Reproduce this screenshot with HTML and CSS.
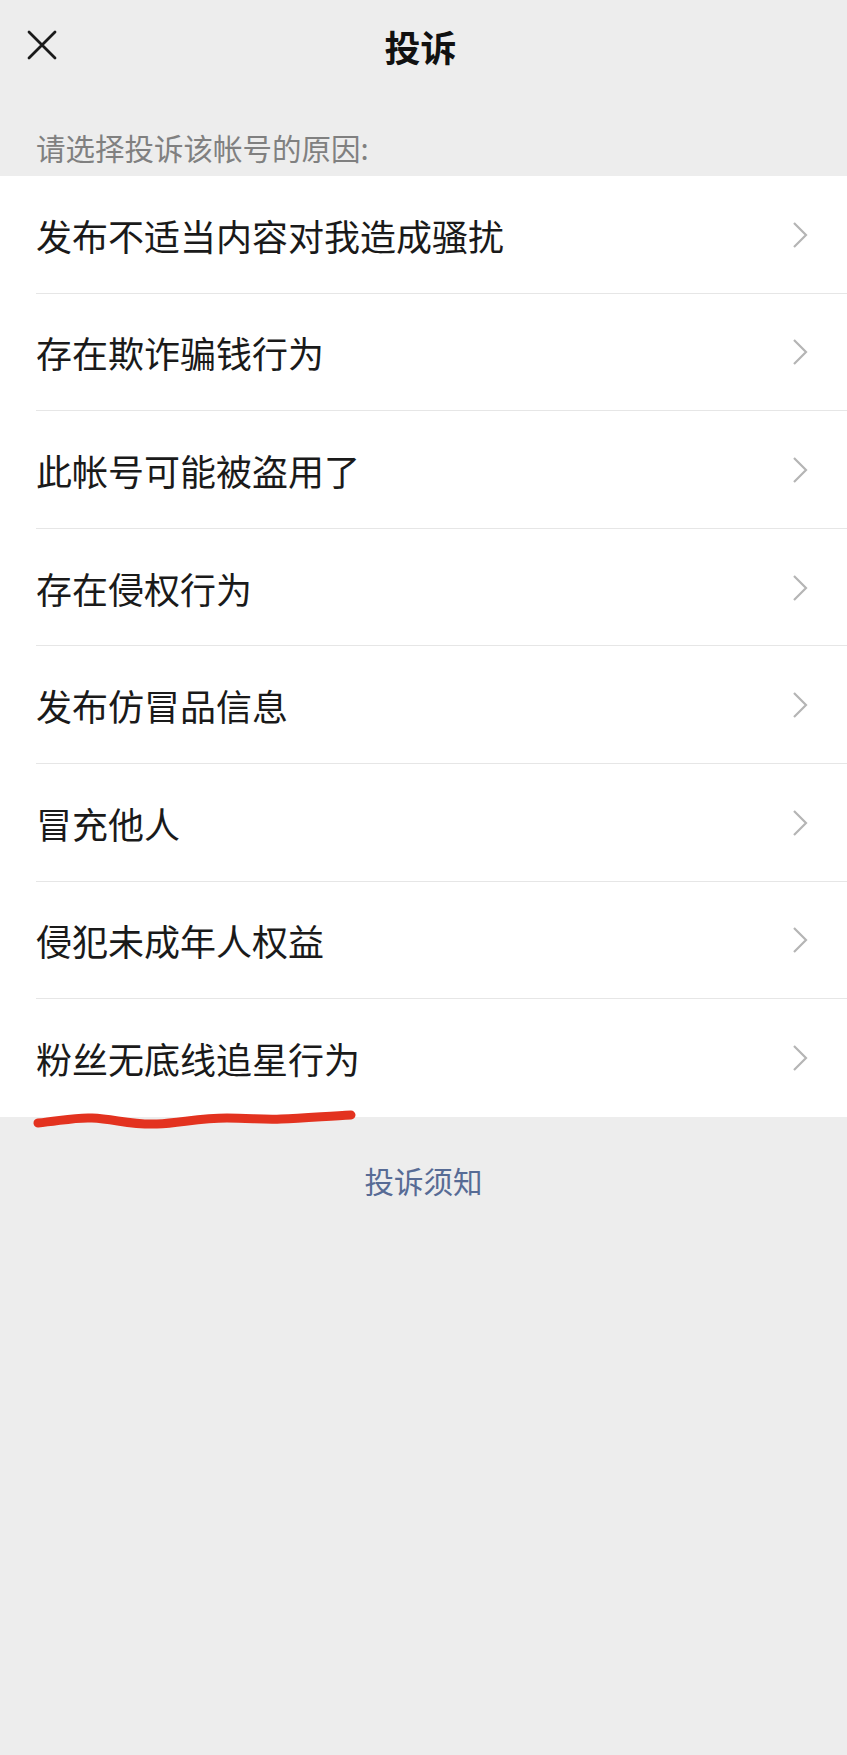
FILE: index.html
```html
<!DOCTYPE html>
<html lang="zh-CN">
<head>
<meta charset="utf-8">
<title>投诉</title>
<link rel="stylesheet" href="styles.css">
</head>
<body>
<div class="page">
  <header class="topbar">
    <svg class="close" viewBox="0 0 30 30" width="30" height="30" aria-hidden="true">
      <path d="M2 2 L28 28 M28 2 L2 28" stroke="#1a1a1a" stroke-width="2.8" fill="none" stroke-linecap="round"/>
    </svg>
    <h1 class="title">投诉</h1>
  </header>
  <div class="hint">请选择投诉该帐号的原因:</div>
  <ul class="list">
    <li class="row"><span class="label">发布不适当内容对我造成骚扰</span><svg class="chev" viewBox="0 0 16 28" width="16" height="28"><polyline points="2,2 14,14 2,26" fill="none" stroke="#b5b5b5" stroke-width="2.2"/></svg></li>
    <li class="row"><span class="label">存在欺诈骗钱行为</span><svg class="chev" viewBox="0 0 16 28" width="16" height="28"><polyline points="2,2 14,14 2,26" fill="none" stroke="#b5b5b5" stroke-width="2.2"/></svg></li>
    <li class="row"><span class="label">此帐号可能被盗用了</span><svg class="chev" viewBox="0 0 16 28" width="16" height="28"><polyline points="2,2 14,14 2,26" fill="none" stroke="#b5b5b5" stroke-width="2.2"/></svg></li>
    <li class="row"><span class="label">存在侵权行为</span><svg class="chev" viewBox="0 0 16 28" width="16" height="28"><polyline points="2,2 14,14 2,26" fill="none" stroke="#b5b5b5" stroke-width="2.2"/></svg></li>
    <li class="row"><span class="label">发布仿冒品信息</span><svg class="chev" viewBox="0 0 16 28" width="16" height="28"><polyline points="2,2 14,14 2,26" fill="none" stroke="#b5b5b5" stroke-width="2.2"/></svg></li>
    <li class="row"><span class="label">冒充他人</span><svg class="chev" viewBox="0 0 16 28" width="16" height="28"><polyline points="2,2 14,14 2,26" fill="none" stroke="#b5b5b5" stroke-width="2.2"/></svg></li>
    <li class="row"><span class="label">侵犯未成年人权益</span><svg class="chev" viewBox="0 0 16 28" width="16" height="28"><polyline points="2,2 14,14 2,26" fill="none" stroke="#b5b5b5" stroke-width="2.2"/></svg></li>
    <li class="row last"><span class="label">粉丝无底线追星行为</span><svg class="chev" viewBox="0 0 16 28" width="16" height="28"><polyline points="2,2 14,14 2,26" fill="none" stroke="#b5b5b5" stroke-width="2.2"/></svg>
      <svg class="scribble" viewBox="0 0 340 30" width="340" height="30" aria-hidden="true">
        <path d="M8 20 C 30 18, 45 14, 62 15 C 85 16, 100 22, 127 21 C 150 20, 170 15, 197 15 C 220 15, 235 17, 251 16 C 275 15, 300 13, 321 12" fill="none" stroke="#e3321f" stroke-width="9" stroke-linecap="round"/>
      </svg>
    </li>
  </ul>
  <div class="notice"><a class="notice-link">投诉须知</a></div>
</div>
</body>
</html>
```

FILE: styles.css
```css
html, body {
  margin: 0;
  padding: 0;
  background: #ededed;
}
body {
  font-family: "Noto Sans CJK SC", "Noto Sans", sans-serif;
  color: #1a1a1a;
}
.page {
  width: 847px;
  min-height: 1755px;
  background: #ededed;
}
.topbar {
  position: relative;
  height: 92px;
  display: flex;
  align-items: center;
  justify-content: center;
  padding-right: 6px;
  box-sizing: border-box;
}
.close {
  position: absolute;
  left: 27px;
  top: 30px;
}
.title {
  margin: 0;
  font-size: 36px;
  font-weight: 700;
  line-height: 42px;
  color: #111;
}
.hint {
  padding: 40px 0 14px 36px;
  font-size: 29.5px;
  line-height: 30px;
  color: #808080;
}
.list {
  list-style: none;
  margin: 0;
  padding: 0;
  background: #fff;
}
.row {
  position: relative;
  height: 117.6px;
  display: flex;
  align-items: center;
  justify-content: space-between;
  padding: 0 39px 0 36px;
  box-sizing: border-box;
}
.row::after {
  content: "";
  position: absolute;
  left: 36px;
  right: 0;
  bottom: 0;
  height: 1px;
  background: #e6e6e6;
}
.row.last::after {
  display: none;
}
.label {
  font-size: 36px;
  line-height: 40px;
  color: #1a1a1a;
}
.chev {
  flex: none;
}
.scribble {
  position: absolute;
  left: 30px;
  top: 104px;
}
.notice {
  padding-top: 48px;
  text-align: center;
}
.notice-link {
  font-size: 29.5px;
  line-height: 30px;
  color: #576b95;
}
```
